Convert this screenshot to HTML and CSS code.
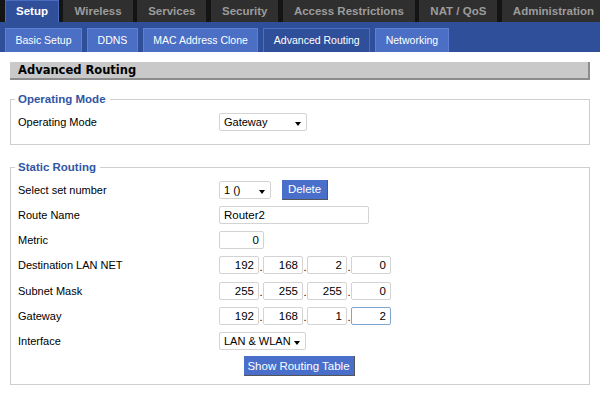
FILE: index.html
```html
<!DOCTYPE html>
<html>
<head>
<meta charset="utf-8">
<link rel="stylesheet" href="styles.css">
</head>
<body>
<div class="topnav">
  <div class="tab active">Setup</div>
  <div class="tab">Wireless</div>
  <div class="tab">Services</div>
  <div class="tab">Security</div>
  <div class="tab">Access Restrictions</div>
  <div class="tab">NAT / QoS</div>
  <div class="tab">Administration</div>
</div>
<div class="subnav">
  <div class="subtab">Basic Setup</div>
  <div class="subtab">DDNS</div>
  <div class="subtab">MAC Address Clone</div>
  <div class="subtab current">Advanced Routing</div>
  <div class="subtab">Networking</div>
</div>
<div class="content">
  <div class="pagehead">Advanced Routing</div>
  <fieldset class="fs fs-mode">
    <legend>Operating Mode</legend>
    <div class="row">
      <div class="label">Operating Mode</div>
      <div class="field"><div class="sel w88">Gateway</div></div>
    </div>
  </fieldset>
  <fieldset class="fs fs-static">
    <legend>Static Routing</legend>
    <div class="row">
      <div class="label">Select set number</div>
      <div class="field"><div class="sel w52">1 ()</div><button class="btn del">Delete</button></div>
    </div>
    <div class="row">
      <div class="label">Route Name</div>
      <div class="field"><input class="txt name" value="Router2"></div>
    </div>
    <div class="row">
      <div class="label">Metric</div>
      <div class="field"><input class="txt num metric" value="0"></div>
    </div>
    <div class="row">
      <div class="label">Destination LAN NET</div>
      <div class="field ip"><input class="txt num oct" value="192"><span class="dot">.</span><input class="txt num oct" value="168"><span class="dot">.</span><input class="txt num oct" value="2"><span class="dot">.</span><input class="txt num oct" value="0"></div>
    </div>
    <div class="row">
      <div class="label">Subnet Mask</div>
      <div class="field ip"><input class="txt num oct" value="255"><span class="dot">.</span><input class="txt num oct" value="255"><span class="dot">.</span><input class="txt num oct" value="255"><span class="dot">.</span><input class="txt num oct" value="0"></div>
    </div>
    <div class="row">
      <div class="label">Gateway</div>
      <div class="field ip"><input class="txt num oct" value="192"><span class="dot">.</span><input class="txt num oct" value="168"><span class="dot">.</span><input class="txt num oct" value="1"><span class="dot">.</span><input class="txt num oct focus" value="2"></div>
    </div>
    <div class="row">
      <div class="label">Interface</div>
      <div class="field"><div class="sel w87">LAN &amp; WLAN</div></div>
    </div>
    <div class="row center">
      <button class="btn show">Show Routing Table</button>
    </div>
  </fieldset>
</div>
</body>
</html>
```
FILE: styles.css
```css
* { box-sizing: border-box; }
html, body { margin: 0; padding: 0; background: #fff; }
body {
  width: 600px; height: 400px; overflow: hidden;
  font-family: "Liberation Sans", Arial, sans-serif;
  font-size: 11px; color: #000;
}
.topnav {
  display: flex; gap: 4.5px; height: 22px;
  background: #141414; padding-left: 5px;
}
.tab {
  flex: none;
  height: 22px; line-height: 22px; padding: 0 11px;
  background: #2f2f2f; color: #9c9c9c;
  font-weight: bold; font-size: 11.5px; white-space: nowrap;
}
.tab.active {
  background: #2f4f9b; color: #fff;
  border: 1px solid #4a6cc0; border-bottom: none;
  line-height: 20px; padding: 0 10px;
}
.subnav {
  display: flex; gap: 5px; height: 30px;
  background: #2f4f9b; padding: 6px 0 0 5px;
}
.subtab {
  height: 24px; line-height: 22px; padding: 0 9.5px;
  background: #4b6fc5; color: #fff; font-size: 10.5px;
  border: 1px solid #5d80d3; border-bottom: none; white-space: nowrap;
}
.subtab.current { background: #2f4f9b; border-color: #4b6fc5; }
.content { padding: 10px 10px 0 10px; }
.pagehead {
  height: 18px; line-height: 16px; padding-left: 8px;
  background: #c9c9c9; border-bottom: 2px solid #8c8c8c; border-right: 2px solid #8c8c8c;
  font-family: "DejaVu Sans", Verdana, sans-serif; font-weight: bold; font-size: 11.5px;
}
.fs {
  margin: 0; border: 1px solid #cfcfcf; padding: 0 0 0 4px;
}
.fs legend {
  padding: 0 4px 0 3px; font-weight: bold; color: #3155a4;
  font-size: 11.5px; line-height: 14px; margin-left: 0;
}
.fs-mode { margin-top: 12px; padding-top: 3px; padding-bottom: 10px; }
.fs-static { margin-top: 15px; padding-top: 3px; padding-bottom: 5px; }
.row { display: flex; align-items: center; height: 25.2px; padding-left: 3px; }
.label { width: 201px; flex: none; }
.field { display: flex; align-items: center; }
.row.center { justify-content: center; padding-left: 0; padding-right: 6px; }
.sel {
  position: relative; height: 18px; line-height: 16px; padding-left: 4px;
  border: 1px solid #d3d3d3; border-radius: 2px; background: #fff; font-size: 11px;
}
.sel::after {
  content: ""; position: absolute; right: 5px; top: 8px;
  border-left: 3.5px solid transparent; border-right: 3.5px solid transparent; border-top: 4px solid #000;
}
.w88 { width: 88px; }
.w52 { width: 52px; }
.w87 { width: 87px; }
.btn {
  font-family: inherit; font-size: 11.5px; color: #fff;
  background: #4a6fca; border: none; border-right: 1px solid #555; border-bottom: 1px solid #555;
  height: 20px; padding: 0; margin: 0;
}
.del { width: 46px; margin-left: 11px; }
.show { width: 111px; }
.txt {
  font-family: inherit; font-size: 11.5px; height: 18px; margin: 0;
  border: 1px solid #d3d3d3; border-radius: 2px; padding: 0 4px; color: #000; background: #fff;
  outline: none;
}
.name { width: 150px; }
.metric { width: 45px; }
.num { text-align: right; }
.oct { width: 40px; }
.oct.focus { border-color: #7fa4d4; }
.dot { width: 4px; text-align: center; font-size: 11px; line-height: 18px; padding-top: 3px; }
```
